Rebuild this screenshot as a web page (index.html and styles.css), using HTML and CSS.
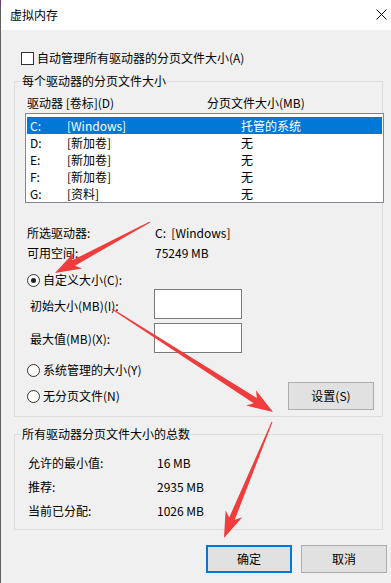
FILE: index.html
```html
<!DOCTYPE html>
<html lang="zh-CN">
<head>
<meta charset="utf-8">
<title>虚拟内存</title>
<link rel="stylesheet" href="styles.css">
</head>
<body>
<div class="window">
  <div class="titlebar">
    <span class="title">虚拟内存</span>
    <svg class="close" width="11" height="11" viewBox="0 0 11 11"><path d="M0.5 0.5 L10.5 10.5 M10.5 0.5 L0.5 10.5" stroke="#000" stroke-width="1" fill="none"/></svg>
  </div>
  <div class="content">
    <label class="check-row"><span class="checkbox"></span><span>自动管理所有驱动器的分页文件大小(A)</span></label>

    <fieldset class="group">
      <legend>每个驱动器的分页文件大小</legend>
      <div class="list-head"><span class="col-drive">驱动器 [卷标](D)</span><span>分页文件大小(MB)</span></div>
      <div class="listbox">
        <div class="row selected"><span>C:</span><span>[Windows]</span><span>托管的系统</span></div>
        <div class="row"><span>D:</span><span>[新加卷]</span><span>无</span></div>
        <div class="row"><span>E:</span><span>[新加卷]</span><span>无</span></div>
        <div class="row"><span>F:</span><span>[新加卷]</span><span>无</span></div>
        <div class="row"><span>G:</span><span>[资料]</span><span>无</span></div>
      </div>
      <div class="info">
        <div class="info-row"><span class="k">所选驱动器:</span><span class="v">C:  [Windows]</span></div>
        <div class="info-row"><span class="k">可用空间:</span><span class="v">75249 MB</span></div>
      </div>
      <label class="radio-row first-radio"><span class="radio checked"></span><span>自定义大小(C):</span></label>
      <div class="size-row"><span class="size-label">初始大小(MB)(I):</span><span class="field"></span></div>
      <div class="size-row second"><span class="size-label lower">最大值(MB)(X):</span><span class="field"></span></div>
      <label class="radio-row sys-radio"><span class="radio"></span><span>系统管理的大小(Y)</span></label>
      <div class="last-row">
        <label class="radio-row"><span class="radio"></span><span>无分页文件(N)</span></label>
        <button class="btn">设置(S)</button>
      </div>
    </fieldset>

    <fieldset class="group totals-group">
      <legend>所有驱动器分页文件大小的总数</legend>
      <div class="totals">
        <div class="info-row"><span class="k2">允许的最小值:</span><span>16 MB</span></div>
        <div class="info-row"><span class="k2">推荐:</span><span>2935 MB</span></div>
        <div class="info-row"><span class="k2">当前已分配:</span><span>1026 MB</span></div>
      </div>
    </fieldset>

    <div class="actions">
      <button class="btn primary">确定</button>
      <button class="btn">取消</button>
    </div>
  </div>

  <svg class="annot" width="391" height="583" viewBox="0 0 391 583">
    <g fill="#f03c3c">
      <polygon transform="translate(150 222) rotate(151.8)" points="0,-0.5 86.8,-3 81.8,-9 107.8,0 81.8,9 86.8,3 0,0.5"/>
      <polygon transform="translate(112 309) rotate(32.6)" points="0,-0.5 170.1,-3 165.1,-9 191.1,0 165.1,9 170.1,3 0,0.5"/>
      <polygon transform="translate(272 422) rotate(112.5)" points="0,-0.5 104.5,-3 99.5,-9 125.5,0 99.5,9 104.5,3 0,0.5"/>
    </g>
  </svg>
</div>
</body>
</html>
```

FILE: styles.css
```css
* {
  box-sizing: border-box;
}

html, body {
  margin: 0;
  padding: 0;
}

body {
  width: 391px;
  height: 583px;
  overflow: hidden;
  background: #f0f0f0;
  font-family: "Noto Sans CJK SC", "Microsoft YaHei", sans-serif;
  font-size: 12px;
  line-height: 16px;
  color: #000;
}

.window {
  position: relative;
  height: 583px;
}

.window::before {
  content: "";
  position: absolute;
  left: 0;
  top: 0;
  bottom: 0;
  width: 1px;
  background: linear-gradient(#6c3f86 0 6px, #5f5f5f 6px);
  z-index: 2;
}

.titlebar {
  height: 30px;
  background: #fff;
  display: flex;
  align-items: center;
  justify-content: space-between;
  padding: 0 4px 1px 10px;
}

.close {
  display: block;
}

.check-row {
  display: flex;
  align-items: center;
  gap: 3px;
  height: 16px;
  margin-top: 20px;
  padding-left: 21px;
}

.checkbox {
  width: 13px;
  height: 13px;
  border: 1px solid #333;
  background: #fff;
  flex: none;
}

.group {
  margin: 7px 0 0 14px;
  width: 369px;
  padding: 0 0 6px 0;
  border: 1px solid #dcdcdc;
  min-width: 0;
}

.group legend {
  margin-left: 6px;
  padding: 0 1px;
  line-height: 16px;
}

.list-head {
  display: flex;
  margin-top: 6px;
  padding-left: 12px;
}

.col-drive {
  width: 180px;
}

.listbox {
  margin: 2px 0 0 10px;
  width: 359px;
  height: 90px;
  border: 1px solid #828790;
  background: #fff;
  padding-top: 3px;
  overflow: hidden;
  position: relative;
}

.row {
  display: grid;
  grid-template-columns: 37px 174px 1fr;
  height: 17px;
  line-height: 17px;
  margin: 0 1px;
  padding-left: 3px;
  white-space: nowrap;
}

.row.selected {
  background: #0078d7;
  color: #fff;
}

.info {
  margin-top: 22px;
  padding-left: 12px;
  display: flex;
  flex-direction: column;
  gap: 4px;
}

.info-row {
  display: flex;
  white-space: pre;
}

.k {
  width: 128px;
}

.radio-row {
  display: flex;
  align-items: center;
  gap: 3px;
  height: 16px;
  padding-left: 12px;
}

.first-radio {
  margin-top: 11px;
}

.sys-radio {
  margin-top: 9px;
}

.radio {
  width: 13px;
  height: 13px;
  border-radius: 50%;
  border: 1px solid #333;
  background: #fff;
  flex: none;
  display: flex;
  align-items: center;
  justify-content: center;
}

.radio.checked::after {
  content: "";
  width: 5px;
  height: 5px;
  border-radius: 50%;
  background: #222;
}

.size-row {
  display: flex;
  align-items: center;
  height: 30px;
  margin-top: 1px;
  padding-left: 15px;
}

.size-row.second {
  margin-top: 4px;
}

.size-label {
  width: 124px;
  padding-top: 4px;
}

.size-label.lower {
  padding-top: 2px;
}

.field {
  width: 88px;
  height: 30px;
  border: 1px solid #7a7a7a;
  background: #fff;
}

.last-row {
  display: flex;
  align-items: center;
  justify-content: space-between;
  height: 28px;
  margin-top: 4px;
  padding-right: 8px;
}

.btn {
  width: 86px;
  height: 28px;
  padding: 0;
  background: #e1e1e1;
  border: 1px solid #adadad;
  font: inherit;
  color: #000;
}

.btn.primary {
  border: 2px solid #0078d7;
}

.totals-group {
  margin-top: 9px;
  padding-bottom: 10px;
}

.totals {
  margin-top: 13px;
  padding-left: 13px;
  display: flex;
  flex-direction: column;
  gap: 8px;
}

.k2 {
  width: 129px;
}

.actions {
  display: flex;
  justify-content: flex-end;
  gap: 9px;
  margin-top: 15px;
  padding-right: 4px;
}

.annot {
  position: absolute;
  left: 0;
  top: 0;
  pointer-events: none;
}
```
